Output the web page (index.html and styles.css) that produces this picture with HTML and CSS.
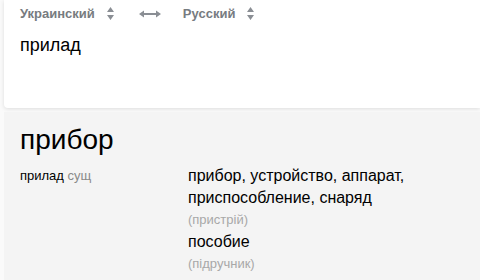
FILE: index.html
```html
<!DOCTYPE html>
<html lang="ru">
<head>
  <meta charset="UTF-8" />
  <title>Словарь</title>
  <link rel="stylesheet" href="styles.css">
</head>
<body>
  <div class="source card">
    <div class="langs">
      <span class="lang">Украинский
        <svg class="sort" width="7" height="13" viewBox="0 0 7 13"><path d="M3.5 0 L7 5 L0 5 Z M0 8 L7 8 L3.5 13 Z" fill="#8a8e94"/></svg>
      </span>
      <svg class="swap" width="22" height="8" viewBox="0 0 22 8"><path d="M0 4 L5 0.5 L5 3 L17 3 L17 0.5 L22 4 L17 7.5 L17 5 L5 5 L5 7.5 Z" fill="#8a8e94"/></svg>
      <span class="lang">Русский
        <svg class="sort" width="7" height="13" viewBox="0 0 7 13"><path d="M3.5 0 L7 5 L0 5 Z M0 8 L7 8 L3.5 13 Z" fill="#8a8e94"/></svg>
      </span>
    </div>
    <div class="query">прилад</div>
  </div>

  <div class="result">
    <h1 class="word">прибор</h1>
    <div class="entry">
      <div class="pos">прилад <span class="tag">сущ</span></div>
      <div class="meanings">
        <div class="meaning">прибор, устройство, аппарат, приспособление, снаряд</div>
        <div class="note">(пристрій)</div>
        <div class="meaning">пособие</div>
        <div class="note">(підручник)</div>
      </div>
    </div>
  </div>
</body>
</html>
```

FILE: styles.css
```css
* { box-sizing: border-box; }
body {
  margin: 0;
  font-family: Arial, "Liberation Sans", sans-serif;
  background: #fafafa;
  color: #000;
  height: 280px;
  overflow: hidden;
}
.card {
  background: #ffffff;
  margin-left: 4px;
  height: 108px;
  border-radius: 0 0 0 4px;
  box-shadow: 0 1px 4px rgba(0, 0, 0, 0.12);
  padding: 5px 16px 0;
}
.langs {
  display: flex;
  align-items: center;
  height: 17px;
  color: #777b80;
  font-size: 13px;
  font-weight: bold;
}
.lang {
  display: flex;
  align-items: center;
}
.sort {
  margin-left: 12px;
}
.swap {
  margin: 0 22px 0 25px;
}
.query {
  font-size: 18px;
  margin-top: 13px;
}
.result {
  background: #f4f4f4;
  margin: 4px 0 0 4px;
  padding: 10px 16px 0;
  height: 168px;
}
.word {
  margin: 0;
  font-weight: normal;
  font-size: 28px;
  line-height: 36px;
}
.entry {
  display: flex;
  margin-top: 7px;
}
.pos {
  width: 168px;
  font-size: 13px;
  line-height: 22px;
}
.tag {
  color: #8a8a8a;
}
.meanings {
  font-size: 16px;
  line-height: 22px;
}
.meaning {
  width: 240px;
}
.note {
  color: #a8a8a8;
  font-size: 13px;
  line-height: 22px;
}
```
